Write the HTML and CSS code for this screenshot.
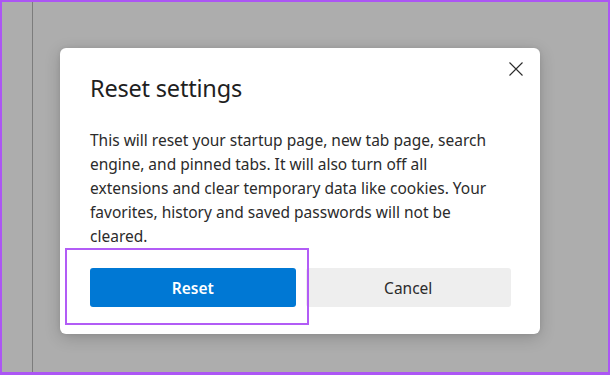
FILE: index.html
```html
<!DOCTYPE html>
<html lang="en">
<head>
  <meta charset="UTF-8" />
  <meta name="viewport" content="width=device-width, initial-scale=1" />
  <title>Reset settings</title>
  <link rel="stylesheet" href="styles.css">
</head>
<body>

<div class="frame">
  <div class="side-rail"></div>

  <!-- Backdrop with dialog -->
  <div class="backdrop">
    <div class="dialog">
      <button class="close-btn" aria-label="Close">
        <svg width="14" height="14" viewBox="0 0 14 14">
          <path d="M0.5 0.5 L13.5 13.5 M13.5 0.5 L0.5 13.5" stroke="#2b2b2b" stroke-width="1.1" fill="none" />
        </svg>
      </button>
      <h2 class="dialog-title">Reset settings</h2>
      <p class="dialog-text">This will reset your startup page, new tab page, search engine, and pinned tabs. It will also turn off all extensions and clear temporary data like cookies. Your favorites, history and saved passwords will not be cleared.</p>
      <div class="dialog-actions">
        <button class="btn btn-primary">Reset</button>
        <button class="btn btn-secondary">Cancel</button>
      </div>
      <div class="highlight"></div>
    </div>
  </div>
</div>

</body>
</html>
```

FILE: styles.css
```css
html, body {
  margin: 0;
  height: 100%;
}

body {
  font-family: "Noto Sans", "Open Sans", sans-serif;
  color: #1f1f1f;
}

.frame {
  box-sizing: border-box;
  height: 375px;
  border: 2px solid #ac56f4;
  border-bottom-width: 3px;
  background-color: #adadad;
  display: flex;
}

.side-rail {
  width: 30px;
  border-right: 1px solid #7c7c7c;
  flex-shrink: 0;
}

.backdrop {
  flex: 1;
  padding: 46px 0 0 27px;
}

.dialog {
  position: relative;
  box-sizing: border-box;
  width: 480px;
  height: 286px;
  background-color: #fff;
  border-radius: 6px;
  padding: 22px 29px 0 30px;
  box-shadow: 0 4px 16px rgba(0, 0, 0, 0.18), 0 0 4px rgba(0, 0, 0, 0.08);
}

.close-btn {
  position: absolute;
  top: 14px;
  right: 17px;
  width: 14px;
  height: 14px;
  padding: 0;
  border: none;
  background: none;
  display: flex;
}

.dialog-title {
  margin: 0;
  font-size: 23.5px;
  font-weight: 400;
  line-height: 36px;
  letter-spacing: -0.2px;
}

.dialog-text {
  max-width: 405px;
  margin: 22px 0 0;
  font-size: 15.5px;
  line-height: 24px;
  color: #2b2b2b;
}

.dialog-actions {
  display: flex;
  gap: 10px;
  margin-top: 20px;
}

.btn {
  flex: 1;
  height: 39px;
  border: none;
  border-radius: 3px;
  font-family: inherit;
  font-size: 15.5px;
}

.btn-primary {
  background-color: #0078d4;
  color: #fff;
  font-weight: 600;
}

.btn-secondary {
  background-color: #eeeeee;
  color: #2b2b2b;
}

.highlight {
  position: absolute;
  left: 5px;
  top: 200px;
  width: 240px;
  height: 73px;
  border: 2px solid #b25cf6;
}
```
